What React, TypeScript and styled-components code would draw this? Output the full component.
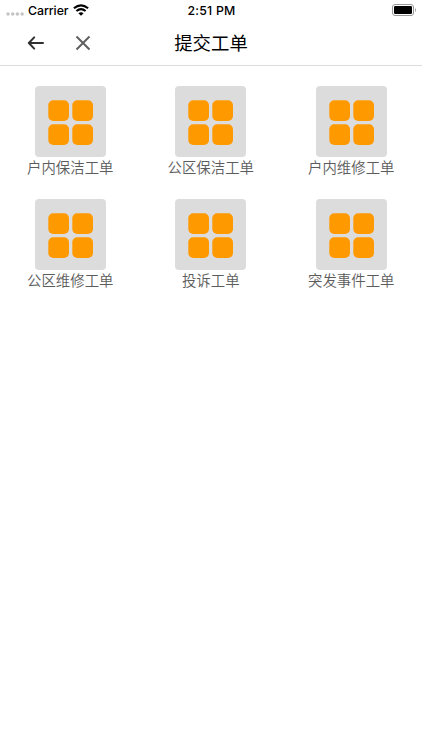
import React from "react";
import styled, { createGlobalStyle } from "styled-components";

const Global = createGlobalStyle`
  * { box-sizing: border-box; }
  body { margin: 0; background: #fff; font-family: Inter, "Noto Sans CJK SC", sans-serif; }
`;
const Screen = styled.main`width: 100%; height: 750px; overflow: hidden; background: #fff;`;
const StatusBar = styled.div`
  height: 20px; display: grid; grid-template-columns: 1fr auto 1fr; align-items: center;
  font-size: 12.3px; line-height: 20px; color: #000; padding: 0 5px 0 6px;
`;
const Side = styled.div<{ $end?: boolean }>`
  display: flex; align-items: center; justify-content: ${p => (p.$end ? "flex-end" : "flex-start")};
`;
const Carrier = styled.span`margin: 0 4px; padding-top: 1px; line-height: 19px; letter-spacing: -0.05px; font-weight: 450;`;
const Clock = styled.span`padding-top: 1px; line-height: 19px; font-weight: 450; letter-spacing: 0.2px;`;
const Battery = styled.svg`margin-right: -1px;`;
const Header = styled.header`
  height: 46px; display: grid; grid-template-columns: 1fr auto 1fr; align-items: center;
  border-bottom: 1px solid #dcdcdc; padding: 0 27px;
`;
const Actions = styled.div`display: flex; gap: 30px;`;
const IconButton = styled.button`border: 0; padding: 0; background: none; display: flex;`;
const Title = styled.h1`margin: 0; font-size: 18.4px; line-height: 26px; font-weight: 400; color: #000;`;
const Grid = styled.section`
  display: grid; grid-template-columns: repeat(3, 140.5px); grid-auto-rows: 113px; padding-top: 20px;
`;
const Item = styled.div`display: flex; flex-direction: column; align-items: center;`;
const Tile = styled.div`
  width: 71px; height: 71px; border-radius: 4px; background: #dcdcdc;
`;
const Label = styled.span`font-size: 14.4px; line-height: 21px; font-weight: 350; color: #5c5c5c; white-space: nowrap;`;
const items = ["户内保洁工单", "公区保洁工单", "户内维修工单", "公区维修工单", "投诉工单", "突发事件工单"];

export default function App() {
  return (
    <Screen>
      <Global />
      <StatusBar>
        <Side>
          <svg width="18" height="20" fill="#c4c4c4">{[2, 6.7, 11.4, 16.1].map(x => <circle key={x} cx={x} cy="14" r="1.75" />)}</svg>
          <Carrier>Carrier</Carrier>
          <svg width="16" height="12" viewBox="0 0 16 12" fill="none" stroke="#000" strokeWidth="2.1"><path d="M.9 4.3Q8-1.7 15.1 4.3M3.4 7Q8 3.2 12.6 7" /><path d="M5.4 9.2Q8 7.1 10.6 9.2L8 11.8Z" fill="#000" stroke="none" /></svg>
        </Side>
        <Clock>2:51 PM</Clock>
        <Side $end>
          <Battery width="26" height="12" viewBox="0 0 26 12"><rect x=".5" y=".5" width="21" height="11" rx="2.5" fill="none" stroke="#999" /><rect x="2" y="2" width="18" height="8" rx="1.2" /><path d="M23 4Q25 6 23 8Z" fill="#999" /></Battery>
        </Side>
      </StatusBar>
      <Header>
        <Actions>
          <IconButton aria-label="返回"><svg width="18" height="16" viewBox="0 0 18 16" fill="none" stroke="#303030" strokeWidth="2" strokeLinecap="round" strokeLinejoin="round"><path d="M16 8H2M7.2 2.4L1.8 8L7.2 13.6" /></svg></IconButton>
          <IconButton aria-label="关闭"><svg width="16" height="16" viewBox="0 0 16 16" fill="none" stroke="#606060" strokeWidth="2"><path d="M1.5 1.5L14.5 14.5M14.5 1.5L1.5 14.5" /></svg></IconButton>
        </Actions>
        <Title>提交工单</Title>
      </Header>
      <Grid>
        {items.map(label => (
          <Item key={label}>
            <Tile><svg width="71" height="71" fill="#ff9900"><rect x="13.3" y="14.2" width="20.7" height="20.7" rx="5" /><rect x="37.3" y="14.2" width="20.7" height="20.7" rx="5" /><rect x="13.3" y="38.2" width="20.7" height="20.7" rx="5" /><rect x="37.3" y="38.2" width="20.7" height="20.7" rx="5" /></svg></Tile>
            <Label>{label}</Label>
          </Item>
        ))}
      </Grid>
    </Screen>
  );
}
